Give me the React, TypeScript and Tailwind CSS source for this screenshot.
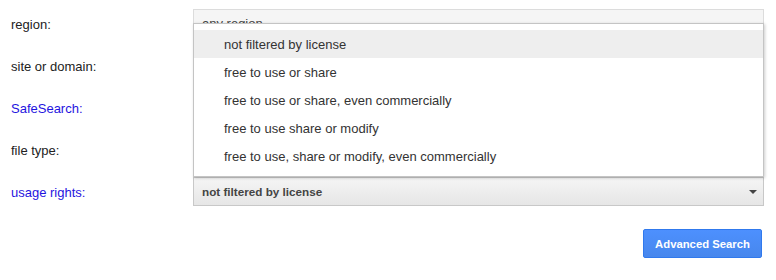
const options = [
  'not filtered by license',
  'free to use or share',
  'free to use or share, even commercially',
  'free to use share or modify',
  'free to use, share or modify, even commercially',
];

function Arrow() {
  return (
    <span className="ml-auto mr-[6px] h-0 w-0 border-x-[4px] border-t-[4px] border-x-transparent border-t-[#444]" />
  );
}

function Row({ label, link, children }: { label: string; link?: boolean; children?: React.ReactNode }) {
  return (
    <div className="flex h-[29px] items-center">
      <div className={`w-[182px] shrink-0 pt-[2px] text-[13px] ${link ? 'text-[#1f14e0]' : 'text-[#222]'}`}>{label}</div>
      <div className="relative flex-1">{children}</div>
    </div>
  );
}

export default function App() {
  return (
    <div className="h-[280px] w-[776px] bg-white pl-[11px] pr-[12px] pt-[9px] font-['Liberation_Sans',Arial,sans-serif]">
      <div className="flex flex-col gap-[13px]">
        <Row label="region:">
          <div className="flex h-[29px] items-start border border-[#dcdcdc] bg-[#f5f5f5] pl-[8px] pt-[4px] text-[13px] text-[#444]">
            any region
            <span className="mt-[9px] ml-auto mr-[6px] h-[2px] w-[8px] bg-[#666]" />
          </div>
        </Row>
        <Row label="site or domain:" />
        <Row label="SafeSearch:" link />
        <Row label="file type:" />
        <Row label="usage rights:" link>
          <div className="absolute bottom-full left-0 right-0 z-10 border border-[#c4c4c4] bg-white py-[6px] shadow-[1px_1px_3px_rgba(0,0,0,0.2)]">
            {options.map((o, i) => (
              <div
                key={o}
                className={`flex h-[28px] items-center pl-[30px] pt-[2px] text-[13px] text-[#333] ${i === 0 ? 'bg-[#eeeeee]' : ''}`}
              >
                {o}
              </div>
            ))}
          </div>
          <div className="flex h-[29px] items-center border border-[#c8c8c8] bg-gradient-to-b from-[#f5f5f5] to-[#e6e6e6] pl-[8px] pt-[1px] text-[11.7px] font-bold text-[#444]">
            not filtered by license
            <Arrow />
          </div>
        </Row>
      </div>
      <div className="mt-[23px] flex justify-end pr-[2px]">
        <button className="h-[29px] w-[119px] rounded-[2px] border border-[#3079ed] bg-gradient-to-b from-[#4d90fe] to-[#4787ed] pt-[1px] text-[11.3px] font-bold text-white">
          Advanced Search
        </button>
      </div>
    </div>
  );
}
